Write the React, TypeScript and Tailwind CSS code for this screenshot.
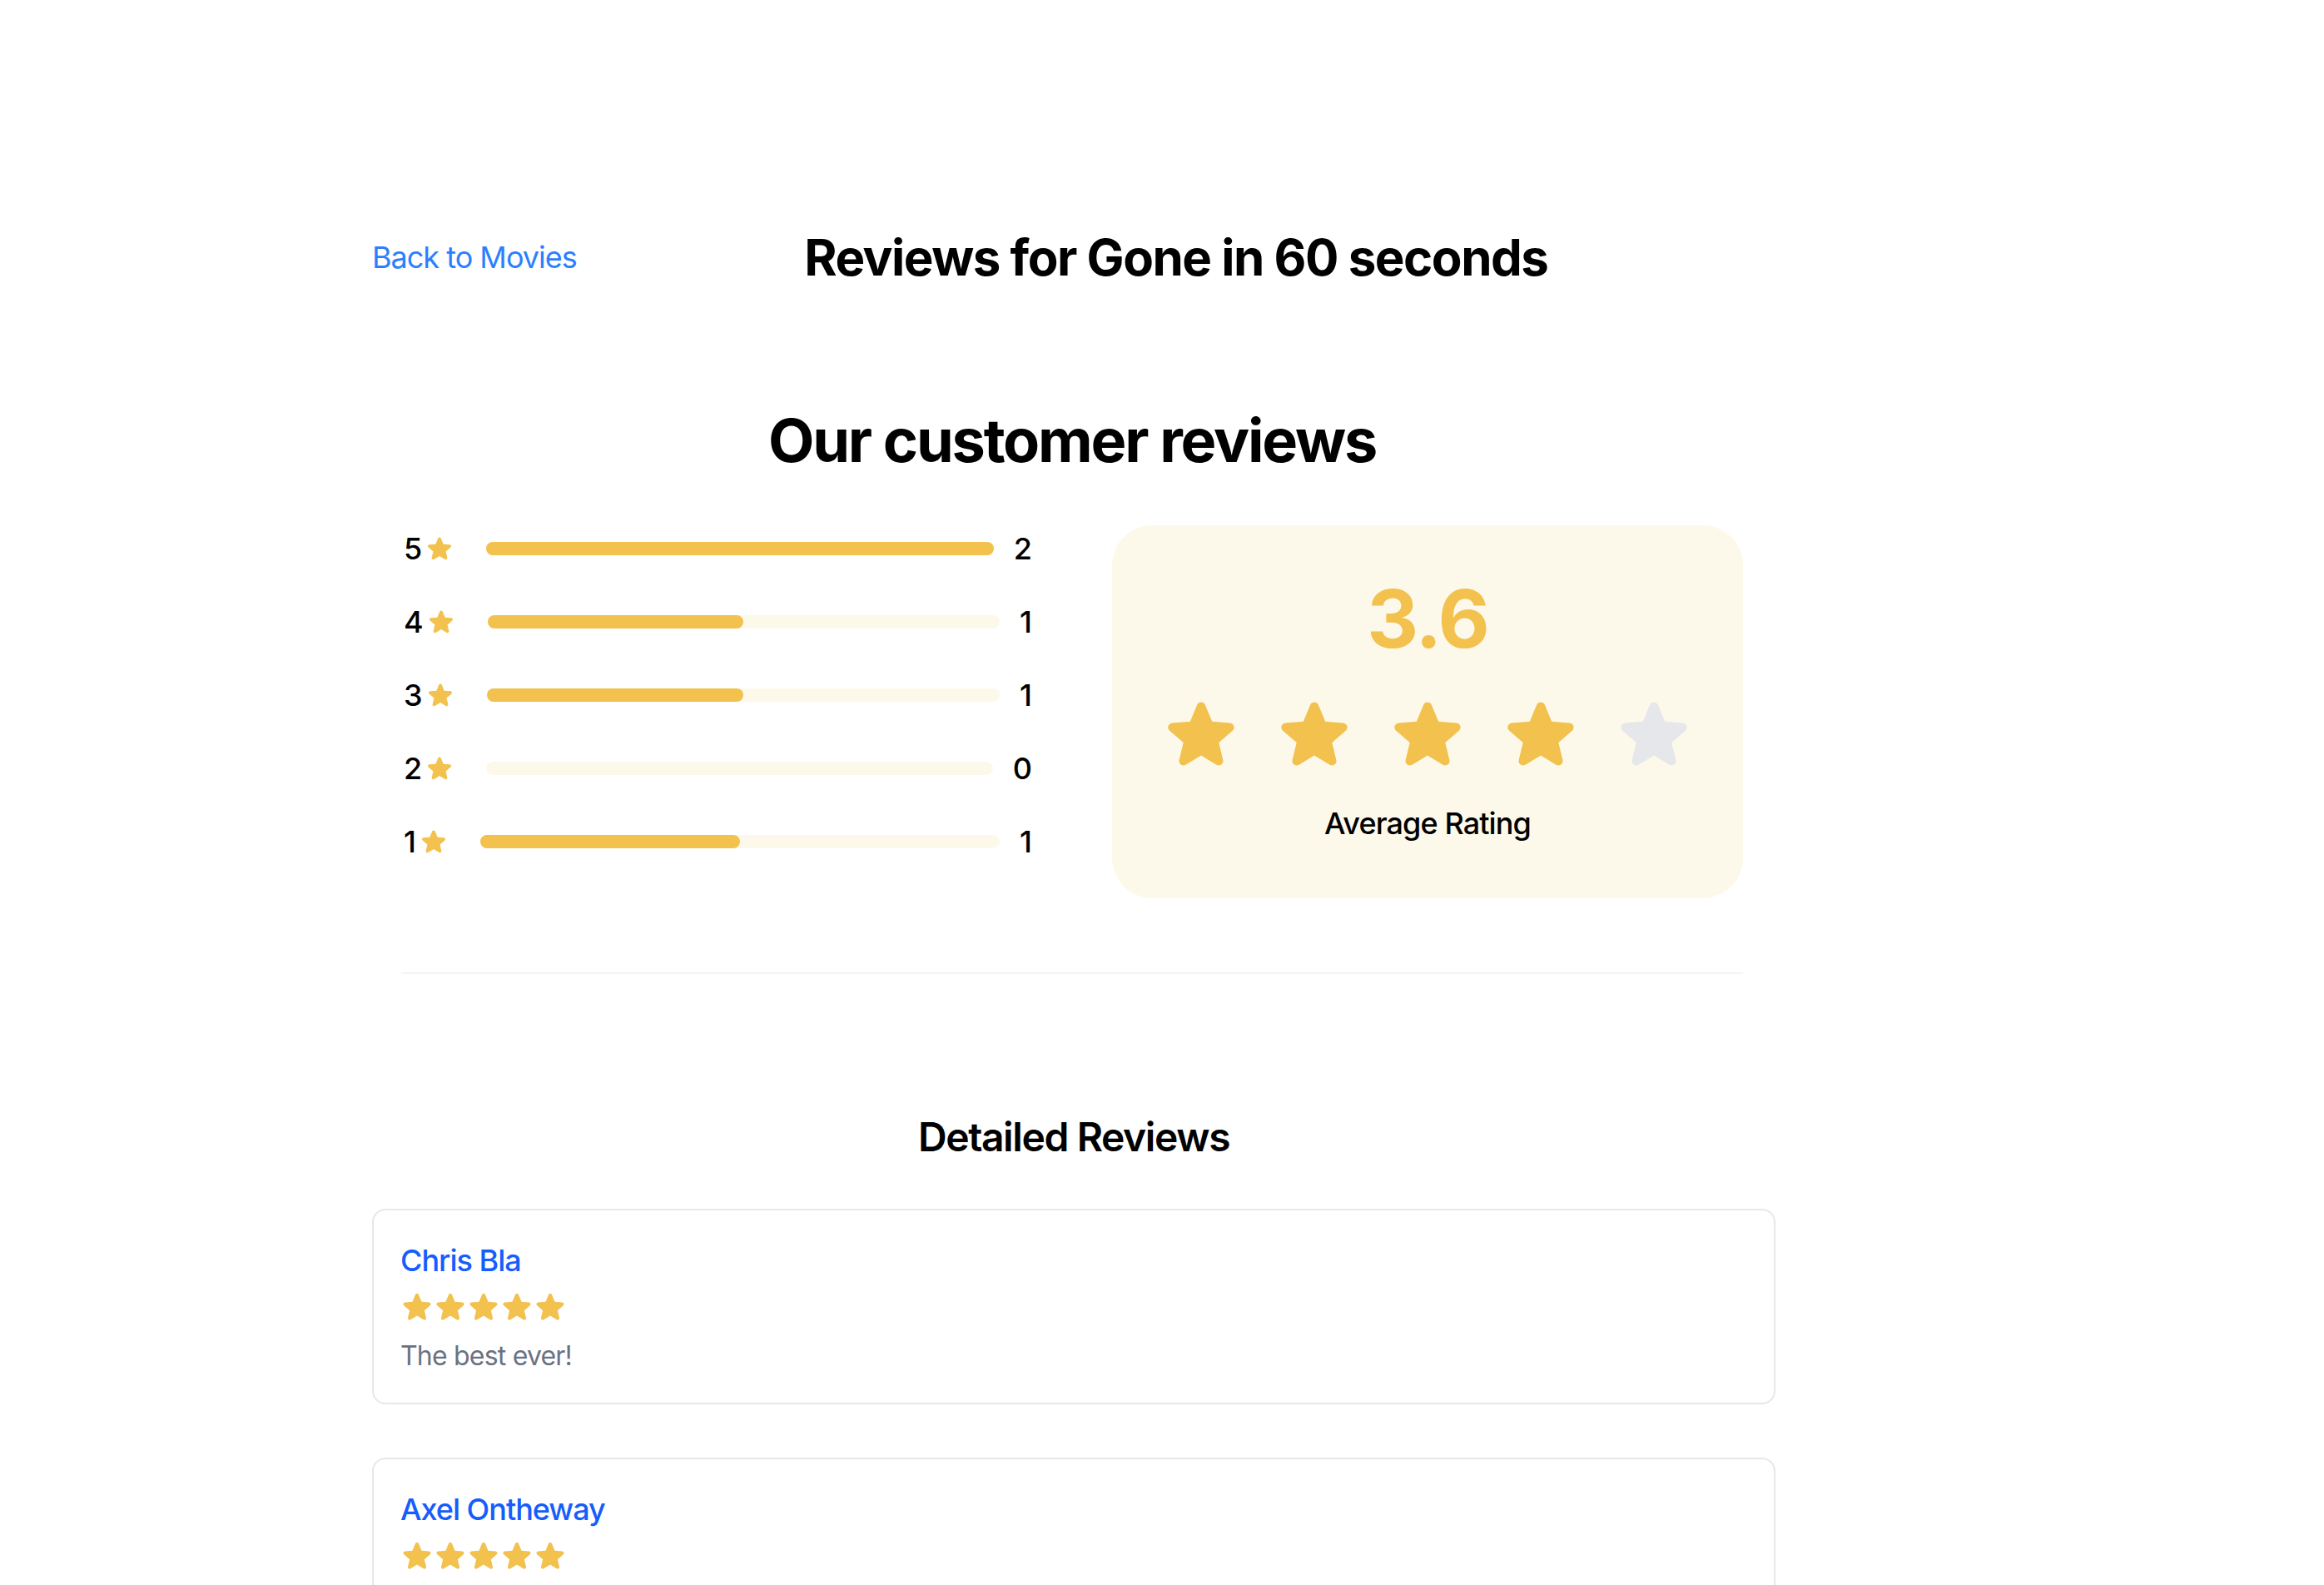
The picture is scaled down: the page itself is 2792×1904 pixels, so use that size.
import React from "react";

const STAR =
  "M10.788 3.21c.448-1.077 1.976-1.077 2.424 0l2.082 5.006 5.404.434c1.164.093 1.636 1.545.749 2.305l-4.117 3.527 1.257 5.273c.271 1.136-.964 2.033-1.96 1.425L12 18.354 7.373 21.18c-.996.608-2.231-.29-1.960-1.425l1.257-5.273-4.117-3.527c-.887-.76-.415-2.212.749-2.305l5.404-.434 2.082-5.005Z";

function Star({ className }: { className: string }) {
  return (
    <svg viewBox="0 0 24 24" fill="currentColor" className={className} aria-hidden="true">
      <path fillRule="evenodd" clipRule="evenodd" d={STAR} />
    </svg>
  );
}

const rows = [
  { stars: 5, count: 2 },
  { stars: 4, count: 1 },
  { stars: 3, count: 1 },
  { stars: 2, count: 0 },
  { stars: 1, count: 1 },
];
const maxCount = 2;

const reviews = [
  { name: "Chris Bla", rating: 5, text: "The best ever!" },
  { name: "Axel Ontheway", rating: 5, text: "Great movie, loved it!" },
];

export default function App() {
  return (
    <div className="min-h-screen bg-white text-black font-['Inter','Noto_Sans',sans-serif]">
      <div className="ml-[447px] w-[1686px] pt-[273px] pb-[80px]">
        <header className="flex items-center justify-between">
          <a href="#" className="text-[36px] leading-[56px] text-blue-500 tracking-[-1px]">
            Back to Movies
          </a>
          <h1 className="text-[60px] leading-[72px] font-bold tracking-[-1.5px]">
            Reviews for Gone in 60 seconds
          </h1>
          <div />
        </header>

        <section className="ml-[35px] w-[1612px] mt-[144px]">
          <h2 className="text-center text-[72px] leading-[80px] font-bold tracking-[-2.2px]">
            Our customer reviews
          </h2>
          <div className="mt-[62px] grid grid-cols-2 gap-x-[96px] items-start">
            <div className="flex flex-col gap-y-[32px]">
              {rows.map((r) => (
                <div key={r.stars} className="flex items-center pl-[3px]">
                  <div className="flex items-center gap-[4px]">
                    <span className="text-[36px] leading-[56px] font-medium">{r.stars}</span>
                    <Star className="w-[34px] h-[34px] text-[#f2c14e]" />
                  </div>
                  <div className="ml-[39px] mr-[24px] flex-1 h-[16px] rounded-full bg-[#fdf9ea]">
                    <div
                      className="h-full rounded-full bg-[#f2c14e]"
                      style={{ width: `${(r.count / maxCount) * 100}%` }}
                    />
                  </div>
                  <span className="text-[36px] leading-[56px] font-medium">{r.count}</span>
                </div>
              ))}
            </div>

            <div className="rounded-[48px] bg-[#fdf9ea] px-[64px] pt-[64px] pb-[62px] flex flex-col items-center">
              <div className="text-[96px] leading-none font-bold text-[#f2c14e] tracking-[-2px]">3.6</div>
              <div className="mt-[43px] flex gap-[40px]">
                {[1, 2, 3, 4, 5].map((i) => (
                  <Star
                    key={i}
                    className={`w-[96px] h-[96px] ${i <= 4 ? "text-[#f2c14e]" : "text-gray-200"}`}
                  />
                ))}
              </div>
              <div className="mt-[31px] text-[36px] leading-[56px] font-medium tracking-[-0.9px]">
                Average Rating
              </div>
            </div>
          </div>
          <div className="mt-[89px] h-[2px] bg-gray-100" />
        </section>

        <h2 className="mt-[164px] text-center text-[48px] leading-[64px] font-semibold tracking-[-1.4px]">
          Detailed Reviews
        </h2>

        <div className="mt-[54px] flex flex-col gap-[64px]">
          {reviews.map((rv) => (
            <div
              key={rv.name}
              className="rounded-[16px] border-2 border-gray-200 bg-white px-[32px] pt-[32px] pb-[32px]"
            >
              <div className="text-[36px] leading-[56px] font-medium text-blue-600 tracking-[-1px]">
                {rv.name}
              </div>
              <div className="mt-[8px] flex">
                {[1, 2, 3, 4, 5].map((i) => (
                  <Star
                    key={i}
                    className={`w-[40px] h-[40px] ${i <= rv.rating ? "text-[#f2c14e]" : "text-gray-200"}`}
                  />
                ))}
              </div>
              <p className="mt-[15px] text-[32px] leading-[48px] text-gray-500 tracking-[-0.8px]">{rv.text}</p>
            </div>
          ))}
        </div>
      </div>
    </div>
  );
}
